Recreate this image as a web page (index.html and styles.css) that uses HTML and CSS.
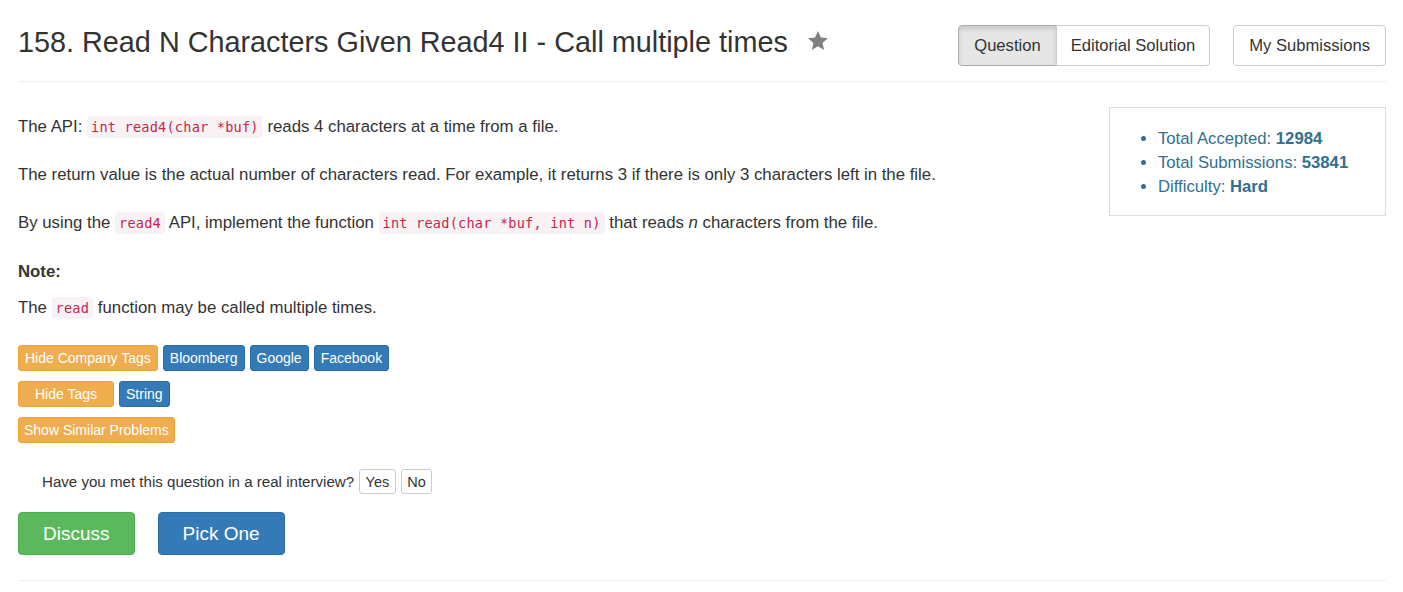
FILE: index.html
```html
<!DOCTYPE html>
<html>
<head>
<meta charset="utf-8">
<title>158. Read N Characters Given Read4 II - Call multiple times</title>
<link rel="stylesheet" href="styles.css">
</head>
<body>
<div class="container">
  <header class="page-header">
    <h3 class="title">158. Read N Characters Given Read4 II - Call multiple times
      <svg class="star" viewBox="0 0 24 24" width="22" height="22"><path d="M12 1.2l3.2 7.1 7.6.7-5.8 5.1 1.7 7.6L12 17.8l-6.7 3.9 1.7-7.6L1.2 9l7.6-.7z" fill="#808080"/></svg>
    </h3>
    <div class="header-actions">
      <div class="btn-group">
        <a class="btn btn-default active">Question</a><a class="btn btn-default btn-narrow">Editorial Solution</a>
      </div>
      <a class="btn btn-default">My Submissions</a>
    </div>
  </header>

  <div class="main">
    <div class="question">
      <p>The API: <code>int read4(char *buf)</code> reads 4 characters at a time from a file.</p>
      <p>The return value is the actual number of characters read. For example, it returns 3 if there is only 3 characters left in the file.</p>
      <p>By using the <code>read4</code> API, implement the function <code>int read(char *buf, int n)</code> that reads <i>n</i> characters from the file.</p>
      <p class="note"><b>Note:</b></p>
      <p class="last">The <code>read</code> function may be called multiple times.</p>

      <div class="tags">
        <div class="tag-row">
          <span class="tag tag-warning">Hide Company Tags</span>
          <span class="tag tag-primary">Bloomberg</span>
          <span class="tag tag-primary">Google</span>
          <span class="tag tag-primary">Facebook</span>
        </div>
        <div class="tag-row">
          <span class="tag tag-warning tag-wide">Hide Tags</span>
          <span class="tag tag-primary">String</span>
        </div>
        <div class="tag-row">
          <span class="tag tag-warning">Show Similar Problems</span>
        </div>
      </div>

      <div class="interview">
        <span class="interview-text">Have you met this question in a real interview?</span>
        <span class="small-btn">Yes</span>
        <span class="small-btn">No</span>
      </div>

      <div class="actions">
        <a class="btn-lg btn-success">Discuss</a>
        <a class="btn-lg btn-primary">Pick One</a>
      </div>
    </div>

    <aside class="side">
      <div class="stats">
        <ul>
          <li>Total Accepted: <b>12984</b></li>
          <li>Total Submissions: <b>53841</b></li>
          <li>Difficulty: <b>Hard</b></li>
        </ul>
      </div>
    </aside>
  </div>
  <div class="footer-rule"></div>
</div>
</body>
</html>
```

FILE: styles.css
```css
html, body {
  margin: 0;
  padding: 0;
  background: #fff;
}
body {
  font-family: "Liberation Sans", Arial, Helvetica, sans-serif;
  font-size: 16.8px;
  color: #333;
}
.container {
  padding: 0 17px 0 18px;
}
.page-header {
  display: flex;
  justify-content: space-between;
  align-items: flex-start;
  padding-top: 25px;
  height: 56px;
  border-bottom: 1px solid #eee;
}
.title {
  margin: 0;
  font-size: 28.8px;
  line-height: 34px;
  font-weight: normal;
  color: #333;
  display: flex;
  align-items: center;
}
.star {
  margin-left: 19px;
  margin-top: -2px;
}
.header-actions {
  display: flex;
  gap: 23px;
}
.btn-group {
  display: flex;
}
.btn {
  display: inline-block;
  height: 39px;
  line-height: 39px;
  padding: 0 15px;
  border: 1px solid #ccc;
  border-radius: 4px;
  background: #fff;
  color: #333;
  font-size: 16.6px;
  cursor: pointer;
}
.btn-group .btn:first-child {
  border-top-right-radius: 0;
  border-bottom-right-radius: 0;
}
.btn-group .btn:last-child {
  border-top-left-radius: 0;
  border-bottom-left-radius: 0;
  margin-left: -1px;
}
.btn.btn-narrow {
  padding: 0 14px;
}
.btn.active {
  background: #e6e6e6;
  border-color: #adadad;
  box-shadow: inset 0 3px 5px rgba(0,0,0,.125);
}

.main {
  display: flex;
  justify-content: space-between;
}
.question {
  padding-top: 33px;
}
.question p {
  margin: 0 0 24px 0;
  line-height: 24px;
}
.question p.note {
  margin-bottom: 12px;
  padding-top: 1px;
}
.question p.last {
  margin-bottom: 0;
}
code {
  font-family: "DejaVu Sans Mono", "Liberation Mono", monospace;
  font-size: 13.6px;
  color: #c7254e;
  background: #f9f2f4;
  padding: 3px 4px;
  border-radius: 4px;
  letter-spacing: 0.2px;
}

.tags {
  margin-top: 25px;
  display: flex;
  flex-direction: column;
  gap: 10px;
}
.tag-row {
  display: flex;
  gap: 5px;
}
.tag {
  display: inline-block;
  font-size: 14px;
  line-height: 24px;
  height: 24px;
  padding: 0 6px;
  border: 1px solid transparent;
  border-radius: 3px;
  color: #fff;
}
.tag-warning {
  background: #f0ad4e;
  border-color: #eea236;
}
.tag-primary {
  background: #337ab7;
  border-color: #2e6da4;
}
.tag-wide {
  width: 82px;
  text-align: center;
}
.tags .tag-row:last-child .tag {
  padding: 0 5px;
}

.interview {
  margin-top: 26px;
  margin-left: 24px;
  display: flex;
  align-items: center;
  gap: 5px;
  font-size: 15.1px;
}
.small-btn {
  display: inline-block;
  height: 23px;
  line-height: 25px;
  padding: 0 5.5px;
  border: 1px solid #ccc;
  border-radius: 3px;
  font-size: 14.5px;
  color: #333;
}

.actions {
  margin-top: 18px;
  display: flex;
  gap: 23px;
}
.btn-lg {
  display: inline-block;
  height: 41px;
  line-height: 41px;
  padding: 0 24px;
  border: 1px solid transparent;
  border-radius: 4px;
  font-size: 19px;
  color: #fff;
}
.btn-success {
  background: #5cb85c;
  border-color: #4cae4c;
}
.btn-primary {
  background: #337ab7;
  border-color: #2e6da4;
}

.side {
  padding-top: 25px;
}
.stats {
  border: 1px solid #ddd;
  padding: 19px 0 16px 8px;
  box-sizing: border-box;
  width: 277px;
  font-size: 16.7px;
}
.stats ul {
  margin: 0;
  padding-left: 40px;
  color: #31708f;
}
.stats li {
  line-height: 24px;
}
.footer-rule {
  margin-top: 25px;
  border-top: 1px solid #eee;
}
```
